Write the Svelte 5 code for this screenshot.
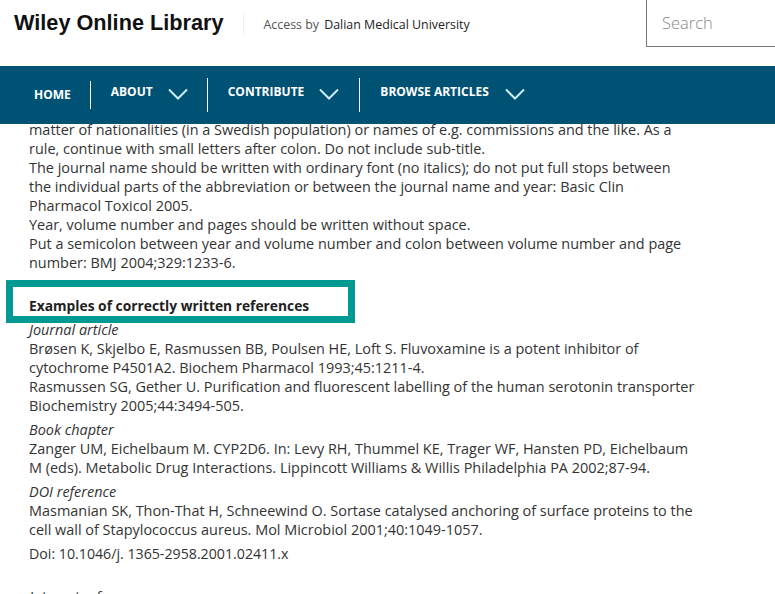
<script>
  const navItems = [
    { label: 'ABOUT', cls: 'about' },
    { label: 'CONTRIBUTE', cls: 'contribute' },
    { label: 'BROWSE ARTICLES', cls: 'browse' }
  ];
</script>

<div class="page">
  <header class="top">
    <div class="brand">Wiley Online Library</div>
    <div class="access"><span class="by">Access by</span> <span class="inst">Dalian Medical University</span></div>
    <div class="search">Search</div>
  </header>

  <nav class="nav">
    <a class="home" href="#home">HOME</a>
    {#each navItems as item}
      <div class="item {item.cls}">
        <span class="label">{item.label}</span>
        <svg class="chev" width="20" height="12" viewBox="0 0 20 12" aria-hidden="true">
          <path d="M1 1.5 L10 10.5 L19 1.5" fill="none" stroke="#cfeaf4" stroke-width="2" />
        </svg>
      </div>
    {/each}
  </nav>

  <main class="main">
    <article class="article">
      <p>matter of nationalities (in a Swedish population) or names of e.g. commissions and the like. As a<br />
      rule, continue with small letters after colon. Do not include sub-title.<br />
      The journal name should be written with ordinary font (no italics); do not put full stops between<br />
      the individual parts of the abbreviation or between the journal name and year: Basic Clin<br />
      Pharmacol Toxicol 2005.<br />
      Year, volume number and pages should be written without space.<br />
      Put a semicolon between year and volume number and colon between volume number and page<br />
      number: BMJ 2004;329:1233-6.</p>

      <h3>Examples of correctly written references</h3>

      <p><em>Journal article</em><br />
      Brøsen K, Skjelbo E, Rasmussen BB, Poulsen HE, Loft S. Fluvoxamine is a potent inhibitor of<br />
      cytochrome P4501A2. Biochem Pharmacol 1993;45:1211-4.<br />
      Rasmussen SG, Gether U. Purification and fluorescent labelling of the human serotonin transporter<br />
      Biochemistry 2005;44:3494-505.</p>

      <p class="gap"><em>Book chapter</em><br />
      Zanger UM, Eichelbaum M. CYP2D6. In: Levy RH, Thummel KE, Trager WF, Hansten PD, Eichelbaum<br />
      M (eds). Metabolic Drug Interactions. Lippincott Williams &amp; Willis Philadelphia PA 2002;87-94.</p>

      <p class="gap"><em>DOI reference</em><br />
      Masmanian SK, Thon-That H, Schneewind O. Sortase catalysed anchoring of surface proteins to the<br />
      cell wall of Stapylococcus aureus. Mol Microbiol 2001;40:1049-1057.</p>

      <p class="doi">Doi: 10.1046/j. 1365-2958.2001.02411.x</p>

      <p class="last"><em>Internet reference</em></p>
    </article>
    <div class="highlight"></div>
  </main>
</div>

<style>
  :global(body) {
    margin: 0;
    background: #fff;
  }
  .page {
    width: 775px;
    height: 594px;
    overflow: hidden;
    font-family: "Open Sans", sans-serif;
    display: flex;
    flex-direction: column;
  }
  .top {
    height: 66px;
    flex: none;
    display: flex;
    align-items: flex-start;
    position: relative;
  }
  .brand {
    font-family: "Liberation Sans", Arial, sans-serif;
    font-weight: 700;
    font-size: 21.7px;
    color: #111;
    line-height: 24px;
    margin: 11px 0 0 14px;
    padding-right: 19px;
    white-space: nowrap;
  }
  .access {
    margin: 14px 0 0 0;
    padding-left: 20px;
    height: 20px;
    line-height: 22px;
    border-left: 1px solid #eee;
    font-size: 12.4px;
    white-space: nowrap;
  }
  .by { color: #555; margin-right: 2px; }
  .inst { color: #222; }
  .search {
    position: absolute;
    left: 646px;
    top: -1px;
    width: 140px;
    height: 48px;
    border: 1px solid #777;
    box-sizing: border-box;
    padding-left: 15px;
    line-height: 46px;
    font-size: 16.5px;
    font-weight: 300;
    color: #888;
  }
  .nav {
    height: 58px;
    flex: none;
    background: #005274;
    display: flex;
    align-items: flex-start;
    color: #fff;
    font-size: 12px;
    font-weight: 700;
  }
  .home {
    color: #fff;
    text-decoration: none;
    margin: 15px 0 0 34px;
    height: 28px;
    line-height: 28px;
    padding-right: 19px;
    border-right: 1px solid #fff;
  }
  .item {
    display: flex;
    align-items: flex-start;
    margin-top: 12px;
    height: 34px;
    white-space: nowrap;
  }
  .label { line-height: 27px; }
  .chev { margin: 10px 0 0 0; }
  .about { padding-left: 20px; border-right: 1px solid #fff; }
  .about .chev { margin-left: 15px; margin-right: 19px; }
  .contribute { padding-left: 20px; border-right: 1px solid #fff; }
  .contribute .chev { margin-left: 15px; margin-right: 20px; }
  .browse { padding-left: 20px; }
  .browse .chev { margin-left: 16px; }
  .main {
    flex: 1;
    overflow: hidden;
    position: relative;
  }
  .article {
    margin-top: -4px;
    padding-left: 29px;
    font-size: 14.45px;
    line-height: 19px;
    color: #333;
    white-space: nowrap;
  }
  p { margin: 0; }
  h3 {
    margin: 24px 0 5px;
    font-size: 13.8px;
    line-height: 19px;
    font-weight: 700;
    color: #222;
  }
  .gap { margin-top: 5px; }
  .doi { margin-top: 5px; font-size: 14.2px; }
  .last { margin-top: 24px; }
  .highlight {
    position: absolute;
    left: 6px;
    top: 156px;
    width: 349px;
    height: 43px;
    box-sizing: border-box;
    border: 7px solid #009a92;
  }
</style>
